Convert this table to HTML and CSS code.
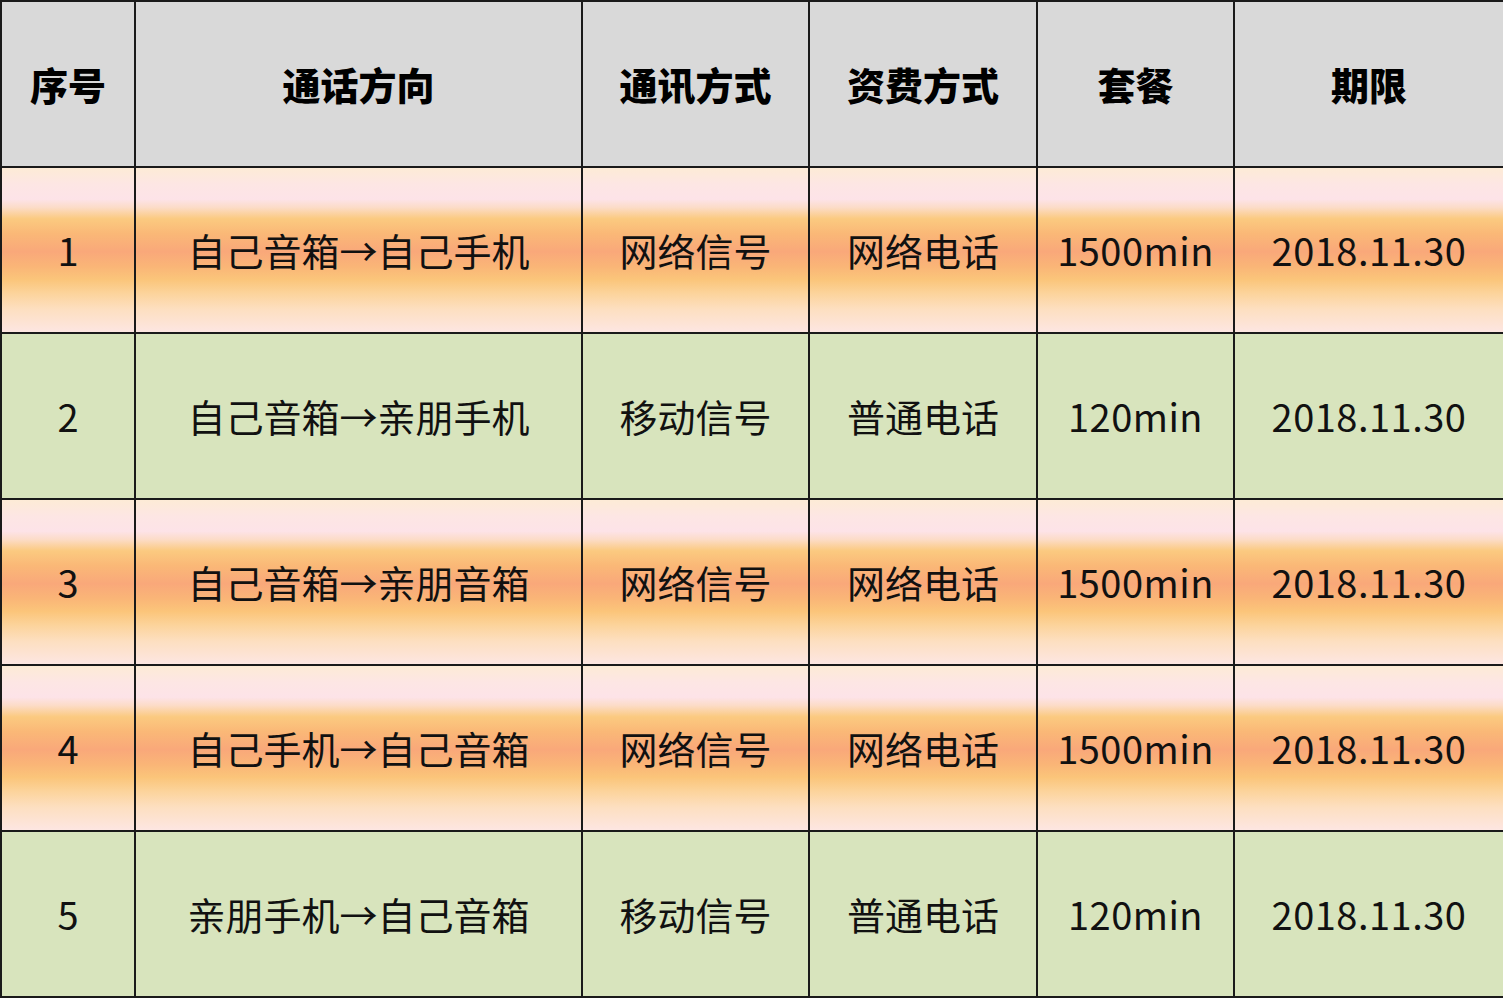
FILE: index.html
```html
<!DOCTYPE html>
<html lang="zh-CN">
<head>
<meta charset="utf-8">
<title>套餐表</title>
<link rel="stylesheet" href="styles.css">
</head>
<body>
<table class="plan">
  <colgroup>
    <col class="c1"><col class="c2"><col class="c3"><col class="c4"><col class="c5"><col class="c6">
  </colgroup>
  <thead>
    <tr class="head">
      <th>序号</th><th>通话方向</th><th>通讯方式</th><th>资费方式</th><th>套餐</th><th>期限</th>
    </tr>
  </thead>
  <tbody>
    <tr class="orange">
      <td>1</td><td>自己音箱→自己手机</td><td>网络信号</td><td>网络电话</td><td class="num">1500min</td><td class="num">2018.11.30</td>
    </tr>
    <tr class="green">
      <td>2</td><td>自己音箱→亲朋手机</td><td>移动信号</td><td>普通电话</td><td class="num">120min</td><td class="num">2018.11.30</td>
    </tr>
    <tr class="orange">
      <td>3</td><td>自己音箱→亲朋音箱</td><td>网络信号</td><td>网络电话</td><td class="num">1500min</td><td class="num">2018.11.30</td>
    </tr>
    <tr class="orange">
      <td>4</td><td>自己手机→自己音箱</td><td>网络信号</td><td>网络电话</td><td class="num">1500min</td><td class="num">2018.11.30</td>
    </tr>
    <tr class="green">
      <td>5</td><td>亲朋手机→自己音箱</td><td>移动信号</td><td>普通电话</td><td class="num">120min</td><td class="num">2018.11.30</td>
    </tr>
  </tbody>
</table>
</body>
</html>
```
FILE: styles.css
```css
html, body {
  margin: 0;
  padding: 0;
  background: #ffffff;
}
.plan {
  width: 1503px;
  height: 998px;
  border-collapse: collapse;
  table-layout: fixed;
  font-family: "Noto Sans CJK SC", "Noto Sans", sans-serif;
  color: #111;
}
.c1 { width: 134px; }
.c2 { width: 447px; }
.c3 { width: 227px; }
.c4 { width: 228px; }
.c5 { width: 197px; }
.c6 { width: 270px; }
.plan th, .plan td {
  border: 2px solid #1a1a1a;
  text-align: center;
  vertical-align: middle;
  padding: 0;
  font-size: 38px;
  line-height: 1;
  white-space: nowrap;
}
.plan tr { height: 166px; }
.plan th {
  background: #d9d9d9;
  font-weight: 900;
  color: #000;
  font-size: 38px;
}
.plan td {
  font-weight: 400;
}
.plan td.num {
  letter-spacing: 0.5px;
}
.green td {
  background: #d8e4bd;
}
.orange td {
  background: linear-gradient(to bottom,
    #fdebd6 0%,
    #fde6e4 10%,
    #fde3e8 19%,
    #fcdcc8 24%,
    #fbca80 31%,
    #fab877 40%,
    #f9a87a 51%,
    #fab577 60%,
    #fbc57a 68%,
    #fcd39a 76%,
    #fddfc0 86%,
    #fde6e2 100%);
}
```
